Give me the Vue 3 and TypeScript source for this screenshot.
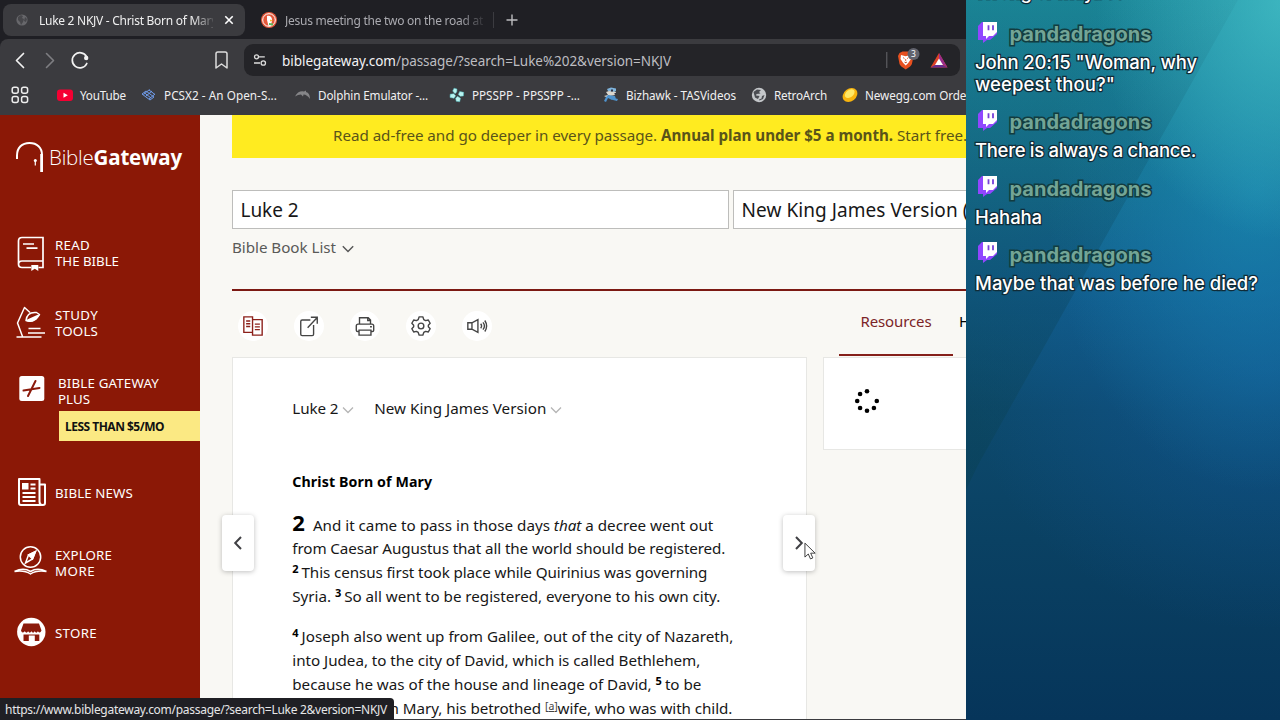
<script setup lang="ts">
interface Bookmark { icon: string; label: string; width: number }
interface PassageLine { html: string; width: number }
interface ChatLine { text: string; width: number }

// Spreads a line of text over a fixed measure by adjusting its tracking.
const vFit = {
  mounted(el: HTMLElement, binding: { value: number }) {
    const count = (el.textContent ?? '').length
    const natural = el.getBoundingClientRect().width
    if (count > 0) el.style.letterSpacing = `${(binding.value - natural) / count}px`
  },
}

const bookmarks: Bookmark[] = [
  { icon: 'youtube', label: 'YouTube', width: 46 },
  { icon: 'pcsx2', label: 'PCSX2 - An Open-S...', width: 113 },
  { icon: 'dolphin', label: 'Dolphin Emulator -...', width: 110 },
  { icon: 'ppsspp', label: 'PPSSPP - PPSSPP -...', width: 108 },
  { icon: 'bizhawk', label: 'Bizhawk - TASVideos', width: 110 },
  { icon: 'globe', label: 'RetroArch', width: 53 },
  { icon: 'newegg', label: 'Newegg.com Order', width: 106 },
]

const paragraphs: PassageLine[][] = [
  [
    { html: '<b class="chapter">2</b>And it came to pass in those days <i>that</i> a decree went out', width: 421 },
    { html: 'from Caesar Augustus that all the world should be registered.', width: 433 },
    { html: '<sup>2</sup>This census first took place while Quirinius was governing', width: 415 },
    { html: 'Syria. <sup>3</sup>So all went to be registered, everyone to his own city.', width: 428 },
  ],
  [
    { html: '<sup>4</sup>Joseph also went up from Galilee, out of the city of Nazareth,', width: 441 },
    { html: 'into Judea, to the city of David, which is called Bethlehem,', width: 408 },
    { html: 'because he was of the house and lineage of David, <sup>5</sup>to be', width: 409 },
    { html: 'registered with Mary, his betrothed <small>[<u>a</u>]</small>wife, who was with child.', width: 440 },
  ],
]

const messages: ChatLine[][] = [
  [{ text: 'John 20:15 "Woman, why', width: 222 }, { text: 'weepest thou?"', width: 140 }],
  [{ text: 'There is always a chance.', width: 221 }],
  [{ text: 'Hahaha', width: 67 }],
  [{ text: 'Maybe that was before he died?', width: 283 }],
]

const spinnerDots = [0, 1, 2, 3, 4, 5, 6].map((n) => {
  const angle = (n * Math.PI) / 4
  return { x: 13 + 9.8 * Math.cos(angle), y: 13 + 9.8 * Math.sin(angle) }
})
</script>

<template>
  <div class="screen">
    <div class="browser">
      <div class="tabs">
        <div class="tab active">
          <svg class="fav" viewBox="0 0 16 16"><circle cx="8" cy="8" r="5.6" fill="#67676b" /><path d="M4 5l3-2 2 1-1 2 2 1-1 3-2 3-1-3-2-2zM11 5l2 2-1 3-2-1z" fill="#47474b" /></svg>
          <span class="tab-title"><span v-fit="178" class="t">Luke 2 NKJV - Christ Born of Mary</span></span>
          <svg class="close" viewBox="0 0 10 10"><path d="M1.3 1.3l7.4 7.4M8.700 1.300l-7.400 7.400" stroke="#fff" stroke-width="1.6" /></svg>
        </div>
        <div class="tab idle">
          <svg class="fav" viewBox="0 0 16 16"><circle cx="8" cy="8" r="8" fill="#e4583b" /><circle cx="8" cy="8" r="6.3" fill="none" stroke="#fff" stroke-width="1" /><path d="M6 4c3-1 5 1 5 4l-1 6H7.500L6 8z" fill="#fff" /><path d="M9 7.500l3 1-3 1z" fill="#f7b82d" /><path d="M8 11l4 .5v2l-4-.6z" fill="#5cb957" /></svg>
          <span class="tab-title"><span v-fit="198" class="t">Jesus meeting the two on the road at</span></span>
        </div>
        <i class="tab-sep"></i>
        <svg class="plus" viewBox="0 0 12 12"><path d="M6 .5v11M.5 6h11" stroke="#bdbdc0" stroke-width="1.4" /></svg>
      </div>

      <div class="toolbar">
        <svg class="nav-icons" viewBox="0 0 244 40" fill="none" stroke-linecap="round" stroke-linejoin="round">
          <path d="M23.500 14.500L16.500 21.500l7 7" stroke="#f2f2f2" stroke-width="1.7" />
          <path d="M46.500 14.500l7 7-7 7" stroke="#7e7e82" stroke-width="1.600" />
          <path d="M86.800 24.500A7.600 7.600 0 1 1 86.500 17.500" stroke="#f2f2f2" stroke-width="1.700" />
          <circle cx="86.200" cy="19" r="2.200" fill="#f2f2f2" />
          <path d="M216 14.800q0-1.800 1.800-1.800h7.400q1.800 0 1.800 1.800V29l-5.500-4-5.500 4z" stroke="#ddd" stroke-width="1.500" />
        </svg>
        <div class="url">
          <svg class="tune" viewBox="0 0 14 14" fill="none" stroke="#ddd" stroke-width="1.300"><circle cx="3.500" cy="3.800" r="2" /><path d="M5.800 3.800h6M1 10h6" /><circle cx="10.300" cy="10" r="2.200" /></svg>
          <span v-fit="389" class="t address"><em>biblegateway.com</em>/passage/?search=Luke%202&amp;version=NKJV</span>
          <svg class="ext" viewBox="0 0 70 28">
            <path d="M.8 6v16" stroke="#68686d" />
            <path d="M13.500 7l3-1.500h6L26 7l1.500 3-1.600 8q-.5 2-6.200 5.500Q14 20 13.500 18L12 10z" fill="#e8501f" />
            <path d="M15 9l4.700 1.200L24.500 9l.5 4-2.800 4-2.500 2.500L17.200 17 14.500 13z" fill="#fff" />
            <path d="M17 11.500l1.500 1.200M22.500 11.500L21 12.700M18.500 16l1.200.7 1.200-.7M19.700 13v2" stroke="#e8501f" stroke-width=".9" />
            <circle cx="27.500" cy="8" r="6" fill="#62636d" />
            <text x="27.500" y="11" font-size="8.500" text-anchor="middle" fill="#fff">3</text>
            <path d="M53 7l8.500 14.500h-17z" fill="#df4226" /><path d="M53 7l8.500 14.500L53 16z" fill="#9a2d8d" /><path d="M44.500 21.500h17L53 17z" fill="#662d91" /><path d="M53 12.500l4 6.500h-8z" fill="#fff" />
          </svg>
        </div>
      </div>

      <div class="bookmarks">
        <svg class="apps" viewBox="0 0 18 18" fill="none" stroke="#eee" stroke-width="1.500"><rect x="1.200" y="1.200" width="6" height="6" rx="2" /><rect x="10.600" y="1.200" width="6" height="6" rx="2" /><rect x="1.200" y="10.600" width="6" height="6" rx="2" /><rect x="10.600" y="10.600" width="6" height="6" rx="2" /></svg>
        <i class="bm-sep"></i>
        <div class="bm-list">
          <div v-for="b in bookmarks" :key="b.label" class="bm">
            <svg viewBox="0 0 16 16">
              <g v-if="b.icon === 'youtube'"><rect y="2.500" width="16" height="11.500" rx="3" fill="#f50032" /><path d="M6.500 5.700l4.300 2.500-4.300 2.500z" fill="#fff" /></g>
              <g v-else-if="b.icon === 'pcsx2'" fill="none" stroke="#6f9ceb" stroke-width="1"><path d="M1 7l4-3 8 6-4 3zM5 9l6-5M8 3l6 4.500M3 5.500l7 5.500M8 12l6-5M8.500 2.500l-6 5" /></g>
              <path v-else-if="b.icon === 'dolphin'" d="M0 9.500q3-6 9-5l2-1v1.500Q15 6 15 12 12 7.500 8.500 7.500L8 9.500 6 7.500Q3 7.500 0 9.500z" fill="#858588" />
              <g v-else-if="b.icon === 'ppsspp'" fill="#b9f4f1" stroke="#52bcc0" stroke-width=".5"><path d="M5 1.200l3 .8-.2 3L6 6.700 3.700 4zM10.700 4.500l4 .8-.3 3.700-3.200.3L9.300 7.500zM1.200 7.200l3.500-.5 2 2L5 11.300 1 10.500zM8.500 9.300l3 2-.8 3.500-3.500-.5-.6-3z" /></g>
              <g v-else-if="b.icon === 'bizhawk'"><path d="M4 2l4-1.500 5 1V4l-2 1-6-1z" fill="#7fb4dd" /><path d="M3 5l3-1 7 1-1 3-5 1-2-1zM1 9l4-1v3z" fill="#dcd7ce" /><path d="M5 8l7 1 1 3-4 1-4-2-2 4-2-1 2-4zM11 11l4 1-1 2-4-1z" fill="#4f93ce" /><path d="M8 2.500h2v2H8zM11.500 6h1.500v1.500h-1.500z" fill="#2d3145" /></g>
              <g v-else-if="b.icon === 'globe'"><circle cx="8" cy="8" r="7.200" fill="#c3c6c9" /><path d="M2.500 5L6 2.500l4 .5-2 2 1.500 1.500-4 .5-.5 1.500 3.500.5L7 12 4 10.500zM13.500 8L12 12l-3.500 1.500L8 12.500l2.500-1L11 9z" fill="#4b4d52" /></g>
              <g v-else><ellipse cx="8" cy="8" rx="8" ry="6.200" transform="rotate(-38 8 8)" fill="#f8b40e" /><ellipse cx="8.600" cy="6.800" rx="5.500" ry="3.600" transform="rotate(-38 8 8)" fill="#ffe866" /></g>
            </svg>
            <span v-fit="b.width" class="t">{{ b.label }}</span>
          </div>
        </div>
      </div>

      <div class="page">
        <aside class="side">
          <div class="logo">
            <svg viewBox="0 0 30 34"><path d="M2 19V15.500C2 7.500 7 3 14.500 3S27 7.500 27 15v17" fill="none" stroke="#fff" stroke-width="2" /><path d="M26.500 32V14" stroke="#fff" stroke-width="2.600" /><circle cx="20.300" cy="20.500" r="1.500" fill="#fff" /><path d="M20.300 21v4.500" stroke="#fff" stroke-width="1.200" /></svg>
            <span v-fit="133" class="t">Bible<b>Gateway</b></span>
          </div>
          <div class="item read">
            <svg viewBox="0 0 34 36" fill="none" stroke="#fff" stroke-width="1.700"><path d="M18 32.500H9Q5.500 32.500 5.500 29V6Q5.500 2.500 9 2.500H30v30h-4.500M30 26H9q-3.500 0-3.500 3.500M10 9h11M13.500 13.200h11" /><path d="M18.300 30h7v6l-3.500-2.300-3.500 2.300z" fill="#fff" stroke="none" /></svg>
            <p><span v-fit="35" class="t">READ</span><span v-fit="64" class="t">THE BIBLE</span></p>
          </div>
          <div class="item study">
            <svg viewBox="0 0 34 36" fill="none" stroke="#fff" stroke-width="1.500" stroke-linejoin="round"><path d="M3.500 32h25M15 28h17M15.500 23.500h12M9.500 31.500L4.500 18 11.500 2.500l5.500 5M13 15.500Q14 6.500 23.500 7.500l3 2Q21 18.500 13 15.500z" /><path d="M14 15.500l11-5-2 3.500q-4 3-9 1.500z" fill="#fff" /></svg>
            <p><span v-fit="43" class="t">STUDY</span><span v-fit="43" class="t">TOOLS</span></p>
          </div>
          <div class="item plus-item">
            <svg viewBox="0 0 34 36"><rect x="6.300" y="5" width="25" height="25" rx="2.500" fill="#fff" /><path d="M10.500 19.500l16-2.500M15 25l7.500-15" stroke="#8b1a0b" stroke-width="2" stroke-linecap="round" /></svg>
            <p><span v-fit="101" class="t">BIBLE GATEWAY</span><span v-fit="32" class="t">PLUS</span></p>
          </div>
          <div class="tag"><span v-fit="99" class="t">LESS THAN $5/MO</span></div>
          <div class="item news">
            <svg viewBox="0 0 34 36" fill="none" stroke="#fff" stroke-width="2"><path d="M26.500 26V4H6v24q0 2 2 2h22q2 0 2-2V9.500h-5.500v17q0 3.500 3 3.500M9.500 18h13M9.500 22h13M9.500 26h13M17.500 9.500h5M17.500 13.500h5" stroke-linejoin="round" /><path d="M9 8h6.500v6.500H9z" fill="#fff" stroke="none" /></svg>
            <p><span v-fit="78" class="t">BIBLE NEWS</span></p>
          </div>
          <div class="item explore">
            <svg viewBox="0 0 34 36" fill="none" stroke="#fff" stroke-width="1.500"><circle cx="17.500" cy="12" r="10.200" /><path d="M22.500 6.500l-3 7.500-7 4 3-8z" /><path d="M22.500 6.500l-3 7.500-4-4z" fill="#fff" /><path d="M1.500 26.500q9-4.500 16 0Q24.500 22 33.500 26.500M1.500 26.500q10-1.500 16 2.500 6-4 16-2.500" /></svg>
            <p><span v-fit="57" class="t">EXPLORE</span><span v-fit="40" class="t">MORE</span></p>
          </div>
          <div class="item store">
            <svg viewBox="0 0 34 36"><circle cx="18.300" cy="17" r="14.200" fill="#fff" /><path d="M10.500 8.500h15.500l2.500 7q-1.500 3.500-3.600.8-1.600 2.700-3.200 0-1.600 2.700-3.300 0-1.600 2.700-3.300 0-1.600 2.700-3.300 0Q9 19 8 15.500zM10.500 19.500h15.800V26h-4.500v-5.500h-6V26h-5.300z" fill="#8b1a0b" /></svg>
            <p><span v-fit="42" class="t">STORE</span></p>
          </div>
        </aside>

        <main class="main">
          <div class="promo"><span v-fit="634" class="t">Read ad-free and go deeper in every passage. <b>Annual plan under $5 a month.</b> Start free.</span></div>
          <div class="search">
            <div class="field"><span v-fit="58" class="t">Luke 2</span></div>
            <div class="field version"><span v-fit="227" class="t">New King James Version (</span></div>
          </div>
          <div class="book-list"><span v-fit="104" class="t">Bible Book List</span><svg viewBox="0 0 12 8"><path d="M.8 1.200L6 6.600l5.200-5.400" fill="none" stroke="#555" stroke-width="1.400" /></svg></div>

          <div class="columns">
            <section class="reading">
              <div class="tools">
                <i><svg viewBox="0 0 24 24"><path d="M11.500 19H2V2h9.500v3M11.500 5H22v17H11.500zM4.500 6.500h4.500M4.500 9.500h4.500M4.500 12.500h4.500M14 10h5.500M14 13h5.500M14 16h5.500" /></svg></i>
                <i><svg viewBox="0 0 24 24"><path d="M13.500 5.500h-9q-1.500 0-1.500 1.500v14q0 1.500 1.500 1.500h11q1.500 0 1.500-1.500V11M10.500 14L21 2.800M14 2.500h7v7" /></svg></i>
                <i><svg viewBox="0 0 24 24"><path d="M6 10V3h9.500L18 5.500V10M6 18H4q-1.500 0-1.500-1.500V12q0-2 2-2h15q2 0 2 2v4.500q0 1.500-1.500 1.500h-2M5.500 16.500h13V22H5.500zM17.500 12.800h2M15 3v3h3" /></svg></i>
                <i><svg viewBox="0 0 24 24"><circle cx="12" cy="12" r="3.100" /><path d="M10 2h4l1 3 2 1.200 3-.7 2 3.500-2 2.200v1.600l2 2.200-2 3.500-3-.7L15 19l-1 3h-4l-1-3-2-1.200-3 .7L2 15l2-2.200v-1.600L2 9l2-3.500 3 .7L9 5z" stroke-linejoin="round" /></svg></i>
                <i><svg viewBox="0 0 24 24"><path d="M2 8.500h4.500L13 5v14l-6.500-3.500H2zM6.500 8.500v7M16 9.500q2 2.500 0 5M18.500 8q3.300 4 0 8M20.500 6q4 6 0 12" /></svg></i>
              </div>
              <div class="card passage">
                <div class="crumbs"><span v-fit="46" class="t">Luke 2</span><svg viewBox="0 0 12 8"><path d="M1 1.500l5 5 5-5" fill="none" stroke="#b5b5b5" stroke-width="1.300" /></svg><span v-fit="172" class="t second">New King James Version</span><svg viewBox="0 0 12 8"><path d="M1 1.500l5 5 5-5" fill="none" stroke="#b5b5b5" stroke-width="1.300" /></svg></div>
                <h3><span v-fit="140" class="t">Christ Born of Mary</span></h3>
                <div v-for="(p, i) in paragraphs" :key="i" class="para">
                  <div v-for="line in p" :key="line.html" class="line"><span v-fit="line.width" class="t" v-html="line.html"></span></div>
                </div>
                <div class="turn prev"><svg viewBox="0 0 10 16"><path d="M8 2L2.200 8 8 14" /></svg></div>
                <div class="turn next"><svg viewBox="0 0 10 16"><path d="M2 2l5.800 6L2 14" /></svg></div>
              </div>
            </section>
            <section class="resources">
              <div class="res-tabs"><div class="res-tab"><span v-fit="71" class="t">Resources</span></div><span class="t res-next">H</span></div>
              <div class="card loading"><svg viewBox="0 0 26 26"><circle v-for="(d, i) in spinnerDots" :key="i" :cx="d.x" :cy="d.y" r="2.300" /></svg></div>
            </section>
          </div>
        </main>
      </div>

      <div class="edge"></div>
      <div class="status"><span v-fit="382" class="t">https://www.biblegateway.com/passage/?search=Luke 2&amp;version=NKJV</span></div>
      <svg class="cursor" viewBox="0 0 14 20"><path d="M1 1v15l3.600-3.300L7 18l2.500-1.100L7.200 11.800H12z" fill="#fff" stroke="#333" stroke-width="1" /></svg>
    </div>

    <aside class="chat">
      <div class="ray"></div>
      <div class="log">
        <div class="msg"><span v-fit="150" class="t">Wrong or maybe?</span></div>
        <div v-for="(m, i) in messages" :key="i" class="entry">
          <div class="who">
            <svg viewBox="0 0 22 24"><path d="M1 6l4-4h15v12l-7 6H10l-4 3v-3H1z" fill="#9146ff" /><path d="M6 2h14v10l-4 4h-4l-3 3v-3H6z" fill="#fff" /><path d="M11.500 5.300v5M16 5.300v5" stroke="#7640d8" stroke-width="1.800" /></svg>
            <span v-fit="142" class="t">pandadragons</span>
          </div>
          <div v-for="line in m" :key="line.text" class="msg"><span v-fit="line.width" class="t">{{ line.text }}</span></div>
        </div>
      </div>
    </aside>
  </div>
</template>

<style>
html, body { overflow: hidden; background: #1f1f24; }
</style>

<style scoped>
* { box-sizing: border-box; }
svg { display: block; flex: none; }
.screen { width: 1280px; height: 720px; display: flex; overflow: hidden; font-family: "Noto Sans", "Open Sans", sans-serif; font-variant-ligatures: none; }
.t { display: inline-block; white-space: pre; flex: none; }
.browser { position: relative; width: 966px; height: 720px; flex: none; overflow: hidden; display: flex; flex-direction: column; background: #1f1f24; }

.tabs { height: 39px; flex: none; display: flex; align-items: center; padding: 1px 0 0 3px; font-size: 12px; color: #f0f0f0; }
.tab { height: 32px; display: flex; align-items: center; border-radius: 8px; }
.tab.active { width: 242px; background: #3b3b3f; padding-left: 11px; }
.tab.idle { width: 245px; padding-left: 16px; color: #aaaab0; }
.fav { width: 16px; height: 16px; }
.tab-title { width: 174px; margin-left: 9px; overflow: hidden; -webkit-mask-image: linear-gradient(90deg, #000 88%, transparent 102%); mask-image: linear-gradient(90deg, #000 88%, transparent 102%); }
.idle .tab-title { width: 198px; margin-left: 8px; }
.close { width: 10px; height: 10px; margin-left: 11px; }
.tab-sep { width: 1px; height: 16px; margin-left: 3px; background: #3b3b40; }
.plus { width: 12px; height: 12px; margin-left: 12px; }

.toolbar { height: 39px; flex: none; display: flex; background: #3b3b3f; border-top-left-radius: 8px; }
.nav-icons { width: 244px; height: 40px; }
.url { width: 716px; height: 32px; margin-top: 5px; border-radius: 9px; background: #242428; display: flex; align-items: center; padding-left: 9px; color: #bdbdc1; font-size: 13.500px; }
.tune { width: 14px; height: 14px; }
.address { margin: 1px 0 0 15px; }
.address em { font-style: normal; color: #f3f3f5; }
.ext { width: 70px; height: 28px; margin-left: 215px; }
.bookmarks { height: 37px; flex: none; display: flex; align-items: center; padding: 0 0 3px 11px; background: #3b3b3f; font-size: 11.700px; color: #f0f0f1; }
.apps { width: 18px; height: 18px; }
.bm-sep { width: 1px; height: 16px; margin: 0 14px 0 14px; background: #1f1f24; }
.bm-list { display: grid; grid-template-columns: 84px 154px 154px 154px 148px 91px 140px; flex: none; }
.bm { display: flex; align-items: center; gap: 6px; }
.bm .t { margin-left: 1px; }
.bm svg { width: 16px; height: 16px; }

.page { flex: 1; min-height: 0; display: flex; }
.side { width: 200px; flex: none; background: #8b1806; color: #fff; }
.logo { display: flex; align-items: center; height: 34px; margin: 25px 0 0 15px; font-family: "Open Sans", "Noto Sans", sans-serif; font-size: 20.500px; font-weight: 300; }
.logo svg { width: 30px; height: 34px; }
.logo .t { margin-left: 4px; }
.logo b { font-weight: 700; }
.item { display: flex; align-items: center; height: 32px; padding-left: 13px; font-size: 13.300px; line-height: 16px; }
.item svg { width: 34px; height: 36px; }
.item p { margin: 0 0 0 8px; display: flex; flex-direction: column; align-items: flex-start; }
.read { margin-top: 63px; }
.study { margin-top: 38px; }
.plus-item { margin-top: 36px; }
.plus-item p { margin-left: 11px; }
.plus-item svg { margin-top: -5px; }
.tag { height: 30px; margin: 4px 0 0 59px; padding-left: 6px; background: #fbe983; color: #111; font-size: 12px; font-weight: 700; line-height: 31px; }
.news { margin-top: 36px; }
.explore { margin-top: 38px; }
.store { margin-top: 38px; }

.main { width: 766px; padding-left: 32px; background: #f9f8f4; flex: none; overflow: hidden; }
.promo { height: 43px; padding-left: 101px; background: #ffeb20; color: #5a5419; font-size: 15.200px; line-height: 41px; }
.search { display: flex; gap: 4px; margin-top: 32px; }
.field { width: 497px; height: 39px; border: 1px solid #bdbdbb; background: #fff; padding-left: 7.500px; font-size: 19px; line-height: 39px; color: #171717; flex: none; }
.version { width: 300px; }
.book-list { display: flex; align-items: center; gap: 6px; height: 36px; color: #5a5a58; font-size: 15.200px; }
.book-list svg { width: 12px; height: 8px; margin-top: 3px; }
.columns { display: flex; gap: 16px; width: 900px; margin-top: 24px; border-top: 2px solid #7c1913; }
.reading { width: 575px; flex: none; }
.tools { display: flex; gap: 26px; height: 66px; padding: 20px 0 0 6px; }
.tools i { width: 30px; height: 30px; border-radius: 50%; background: #fff; display: flex; align-items: center; justify-content: center; }
.tools svg { width: 22px; height: 22px; fill: none; stroke: #444; stroke-width: 1.500; }
.tools i:first-child svg { stroke: #8c201a; }
.card { background: #fff; border: 1px solid #e7e7e4; }
.passage { position: relative; height: 400px; padding-left: 59.300px; font-size: 15.200px; line-height: 24px; color: #171717; }
.crumbs { display: flex; align-items: center; height: 24px; margin-top: 38px; }
.crumbs svg { width: 12px; height: 8px; margin: 4px 0 0 4px; }
.crumbs .second { margin-left: 20px; }
h3 { margin: 50px 0 18px; height: 24px; font-size: 14.200px; font-weight: 700; color: #000; }
.para { margin-bottom: 16px; }
.line { height: 24px; }
.line :deep(.chapter) { font-size: 22px; line-height: 20px; margin-right: 8px; color: #000; }
.line :deep(sup) { font-size: 11px; font-weight: 700; line-height: 0; vertical-align: 5px; margin-right: 3px; color: #000; }
.line :deep(small) { font-size: 10.500px; line-height: 0; vertical-align: 4px; color: #444; }
.turn { position: absolute; top: 157px; width: 32px; height: 56px; border-radius: 4px; background: #fff; box-shadow: 0 1px 5px rgba(0, 0, 0, .25); display: flex; align-items: center; justify-content: center; }
.turn svg { width: 10px; height: 16px; fill: none; stroke: #404044; stroke-width: 2; }
.prev { left: -11px; }
.next { left: 550px; }
.resources { flex: 1; }
.res-tabs { display: flex; height: 66px; padding-left: 16px; font-size: 15px; line-height: 24px; }
.res-tab { width: 114px; height: 65px; padding: 18px 0 0 21.500px; border-bottom: 2px solid #85201a; color: #7b2427; }
.res-next { margin: 18px 0 0 6px; }
.loading { height: 93px; padding: 30px 0 0 30px; }
.loading svg { width: 26px; height: 26px; fill: #000; }

.edge { position: absolute; left: 0; right: 0; bottom: 0; height: 1px; background: #3a3a3e; }
.status { position: absolute; left: 0; bottom: 0; width: 394px; height: 22px; padding-left: 5px; border-top-right-radius: 4px; background: #1f1f24; color: #e6e6e8; font-size: 12px; line-height: 23px; }
.cursor { position: absolute; left: 804px; top: 542px; width: 13px; height: 19px; }

.chat { position: relative; width: 314px; height: 720px; flex: none; overflow: hidden; background:
  radial-gradient(ellipse 190px 240px at 320px 0, rgba(75, 200, 205, .7), transparent),
  radial-gradient(ellipse 210px 300px at 290px 190px, rgba(28, 150, 190, .55), transparent),
  radial-gradient(ellipse 300px 260px at 300px 370px, rgba(18, 92, 165, .5), transparent),
  linear-gradient(180deg, #1b8798 0, #17738f 150px, #115d89 290px, #0d4a6d 410px, #0a4163 540px, #06355a 720px); }
.ray { position: absolute; inset: 0; clip-path: polygon(0 0, 272px 0, 12px 465px, 0 490px); background: linear-gradient(180deg, rgba(10, 70, 85, .05), rgba(10, 62, 80, .28) 300px, rgba(8, 60, 65, .24) 460px); }
.log { position: relative; padding-left: 9px; margin-top: -19px; font-family: Inter, "Noto Sans", sans-serif; font-size: 18.500px; font-weight: 500; color: #fff; line-height: 22px; paint-order: stroke fill; -webkit-text-stroke: 2.500px #102c38; }
.msg { height: 22px; }
.entry { margin-top: 17px; }
.entry + .entry { margin-top: 13.300px; }
.who { display: flex; align-items: center; height: 28px; margin-bottom: 3px; font-size: 20px; font-weight: 700; color: #73a596; -webkit-text-stroke: 3px #123c40; }
.who svg { width: 22px; height: 24px; margin: -5px 10.500px 0 2px; }
</style>
